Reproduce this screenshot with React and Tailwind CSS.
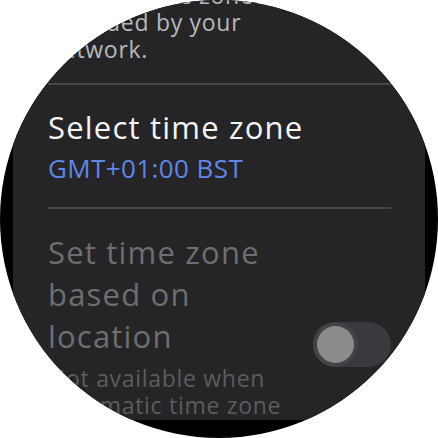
const font = { fontFamily: '"Open Sans", "Noto Sans", sans-serif' }

function Toggle() {
  return (
    <div className="flex h-[45px] w-[78px] shrink-0 items-center rounded-full bg-[#3a393e]">
      <div className="flex h-[45px] w-[45px] items-center justify-center rounded-full bg-[#434247]">
        <div className="h-[37px] w-[37px] rounded-full bg-[#8b8b8b]" />
      </div>
    </div>
  )
}

function Divider({ className = "" }) {
  return <div className={`h-[2px] bg-[#464648] ${className}`} />
}

export default function App() {
  return (
    <div className="h-[438px] w-[438px] bg-white" style={font}>
      <div className="h-full w-full overflow-hidden rounded-full bg-black">
        <div className="mx-[13px] h-full bg-[#252527] pl-[35px] pr-[34px]">
          {/* tail of the automatic time zone item */}
          <p className="-mt-[18px] w-[250px] text-[23px] leading-[27px] tracking-[0.7px] text-[#b9b9bb]">
            Use the time zone provided by your network.
          </p>

          <Divider className="mt-[20px]" />

          <div className="mt-[22px]">
            <p className="text-[31px] leading-[40px] tracking-[1.2px] text-[#f4f4f4]">
              Select time zone
            </p>
            <p className="mt-[4px] text-[26px] leading-[34px] tracking-[0.4px] text-[#5f86e8]">
              GMT+01:00 BST
            </p>
          </div>

          <Divider className="mt-[22px]" />

          <div className="mt-[22px] flex items-start justify-between">
            <div className="w-[250px]">
              <p className="text-[31px] leading-[42px] tracking-[1.2px] text-[#6e6e70]">
                Set time zone based on location
              </p>
              <p className="mt-[8px] text-[23px] leading-[27px] tracking-[0.7px] text-[#5c5c5e]">
                Not available when automatic time zone is off
              </p>
            </div>
            <div className="mt-[91px]">
              <Toggle />
            </div>
          </div>
        </div>
      </div>
    </div>
  )
}
